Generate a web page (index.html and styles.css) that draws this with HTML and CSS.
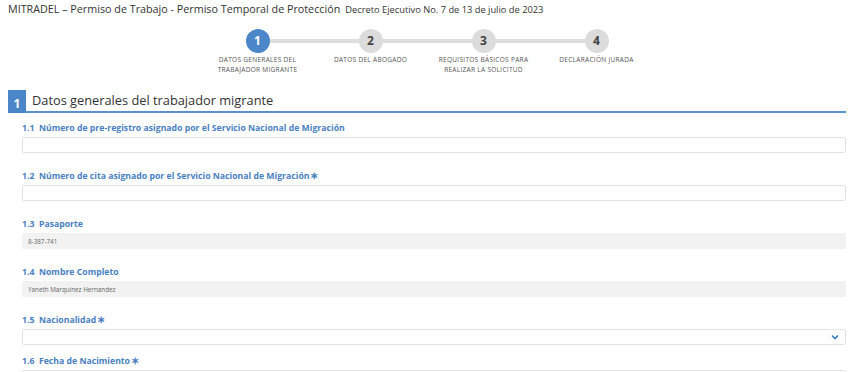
FILE: index.html
```html
<!DOCTYPE html>
<html lang="es">
<head>
    <meta charset="UTF-8">
    <meta name="viewport" content="width=device-width, initial-scale=1.0">
    <title>Permiso Temporal de Protección</title>
    <link rel="stylesheet" href="styles.css">
</head>
<body>

<header class="top">
    <span class="titulo">MITRADEL – Permiso de Trabajo - Permiso Temporal de Protección</span>
    <span class="decreto">Decreto Ejecutivo No. 7 de 13 de julio de 2023</span>
</header>

<div class="stepper">
    <div class="step active">
        <div class="circle">1</div>
        <div class="step-label">Datos generales del trabajador migrante</div>
    </div>
    <div class="step">
        <div class="circle">2</div>
        <div class="step-label">Datos del abogado</div>
    </div>
    <div class="step">
        <div class="circle">3</div>
        <div class="step-label">Requisitos básicos para realizar la solicitud</div>
    </div>
    <div class="step">
        <div class="circle">4</div>
        <div class="step-label">Declaración jurada</div>
    </div>
</div>

<section class="seccion">
    <div class="seccion-head">
        <span class="num">1</span>
        <h2>Datos generales del trabajador migrante</h2>
    </div>

    <div class="campos">
        <div class="campo">
            <label for="prereg">1.1&nbsp; Número de pre-registro asignado por el Servicio Nacional de Migración</label>
            <input type="text" id="prereg">
        </div>
        <div class="campo">
            <label for="cita">1.2&nbsp; Número de cita asignado por el Servicio Nacional de Migración<span class="req">∗</span></label>
            <input type="text" id="cita">
        </div>
        <div class="campo">
            <label for="pasaporte">1.3&nbsp; Pasaporte</label>
            <input type="text" id="pasaporte" value="8-387-741" readonly>
        </div>
        <div class="campo">
            <label for="nombre">1.4&nbsp; Nombre Completo</label>
            <input type="text" id="nombre" value="Yaneth Marquinez Hernandez" readonly>
        </div>
        <div class="campo corto">
            <label for="nac">1.5&nbsp; Nacionalidad<span class="req">∗</span></label>
            <div class="select">
                <select id="nac"><option></option></select>
                <svg width="8" height="6" viewBox="0 0 8 6"><path d="M1 1.5 L4 4.5 L7 1.5" fill="none" stroke="#3b78c4" stroke-width="1.6"/></svg>
            </div>
        </div>
        <div class="campo">
            <label for="fecha">1.6&nbsp; Fecha de Nacimiento<span class="req">∗</span></label>
            <input type="text" id="fecha">
        </div>
    </div>
</section>

</body>
</html>
```

FILE: styles.css
```css
body {
    font-family: "Open Sans", "Noto Sans", sans-serif;
    color: #333;
    background: #fff;
    margin: 0;
    padding: 0 9px 0 8px;
}
.top {
    display: flex;
    align-items: baseline;
    gap: 5px;
    padding-top: 2px;
    height: 20px;
}
.titulo {
    font-size: 10.75px;
    color: #333;
}
.decreto {
    font-size: 9.3px;
    color: #333;
}

/* pasos */
.stepper {
    display: flex;
    justify-content: center;
    margin-top: 7px;
}
.step {
    width: 113px;
    position: relative;
    display: flex;
    flex-direction: column;
    align-items: center;
}
.step:not(:last-child)::after {
    content: "";
    position: absolute;
    top: 10px;
    left: 50%;
    width: 100%;
    height: 4px;
    background: #dedede;
}
.circle {
    position: relative;
    z-index: 1;
    width: 24px;
    height: 24px;
    border-radius: 50%;
    background: #dcdcdc;
    color: #444;
    font-weight: bold;
    font-size: 12px;
    line-height: 24px;
    text-align: center;
}
.step.active .circle {
    background: #4a86c8;
    color: #fff;
}
.step-label {
    margin-top: 2px;
    font-size: 6.5px;
    letter-spacing: 0.3px;
    line-height: 10px;
    text-transform: uppercase;
    text-align: center;
    color: #555;
    width: 100px;
}

/* seccion */
.seccion {
    margin-top: 15px;
}
.seccion-head {
    display: flex;
    align-items: flex-end;
    border-bottom: 2px solid #5a8fd0;
}
.num {
    width: 18px;
    height: 23px;
    background: #4a86c8;
    color: #fff;
    font-weight: bold;
    font-size: 12px;
    line-height: 27px;
    text-align: center;
    margin-bottom: -2px;
}
.seccion-head h2 {
    margin: 0 0 1px 6px;
    font-size: 12.8px;
    font-weight: normal;
    color: #333;
    line-height: 20px;
}
.campos {
    padding: 9px 0 0 14px;
}
.campo {
    margin-bottom: 17px;
}
.campo.corto {
    margin-bottom: 10px;
}
label {
    display: block;
    height: 12px;
    font-size: 8.7px;
    font-weight: bold;
    color: #4a7fc1;
    line-height: 12px;
    margin-bottom: 3px;
}
.req {
    color: #4a7fc1;
    font-size: 10px;
    line-height: 1px;
    margin-left: 1px;
}
input, select {
    display: block;
    width: 100%;
    box-sizing: border-box;
    height: 16px;
    border: 1px solid #e3e3e3;
    border-radius: 2px;
    background: #fff;
    font-family: inherit;
    font-size: 6.3px;
    color: #666;
    padding: 0 5px;
    margin: 0;
    outline: none;
}
input[readonly] {
    background: #f2f2f2;
    border-color: #f2f2f2;
}
.select {
    position: relative;
}
select {
    appearance: none;
}
.select svg {
    position: absolute;
    right: 7px;
    top: 5px;
}
```
